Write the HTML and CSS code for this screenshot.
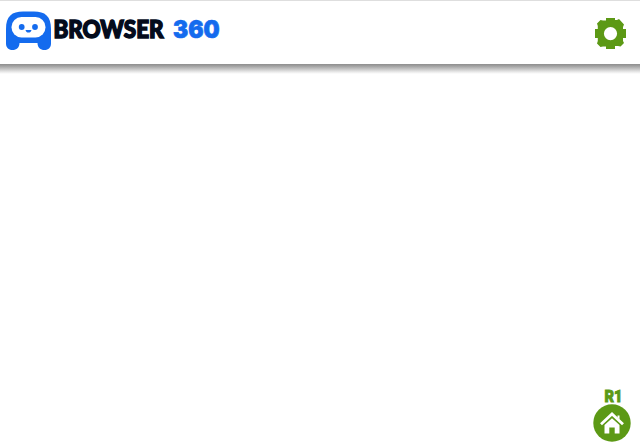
FILE: index.html
```
<!DOCTYPE html>
<html lang="en">
<head>
<meta charset="utf-8">
<title>Browser 360</title>
<link rel="stylesheet" href="styles.css">
</head>
<body>
<header class="header">
  <div class="brand">
    <svg class="logo" width="45" height="39" viewBox="0 0 45 39">
      <path fill="#146bee" d="M0 18C0 5 6 .5 17 .5h11c11 0 17 4.500 17 17.500v14.500c0 4-2.500 6.500-6.500 6.500S31.500 36.500 31.500 32h-18C13.500 36.500 10.500 39 6.500 39S0 36.500 0 32.500z"/>
      <rect x="5.500" y="6" width="34" height="20.500" rx="10" fill="#fff"/>
      <ellipse cx="15.700" cy="16" rx="2.900" ry="3" fill="#146bee"/>
      <ellipse cx="29" cy="16" rx="2.900" ry="3" fill="#146bee"/>
      <path d="M19.500 19h6c-.4 3.400-5.600 3.400-6 0z" fill="#146bee"/>
    </svg>
    <svg class="wordmark" width="168" height="28">
      <text class="word" y="22.500" x="1.500" textLength="110" lengthAdjust="spacingAndGlyphs">BROWSER</text>
      <text class="number" x="121" y="23" textLength="46.500" lengthAdjust="spacingAndGlyphs">360</text>
    </svg>
  </div>
  <svg class="settings" width="31" height="31" viewBox="0 0 31 31">
    <path fill="#5c9915" fill-rule="evenodd" d="M11 0h9v2h2l2-1 5 5.500-1 2.500v2h3v9h-3v3l1 2-3.500 3.500L23 28h-3v3h-9v-2.500H8L5.500 29 2 25.500l.8-2.500V20H0v-9h2.800V8L2 5.500 5.500 2 8 2.500h3zM15.500 9a6.600 6.600 0 1 0 0 13.200a6.600 6.600 0 1 0 0-13.200z"/>
  </svg>
</header>
<main class="content">
  <div class="home">
    <svg class="tag" width="20" height="14"><text class="tag-text" x="1.500" y="12.500" textLength="18" lengthAdjust="spacingAndGlyphs">R1</text></svg>
    <svg class="home-icon" width="38" height="38" viewBox="0 0 38 38">
      <circle cx="19" cy="19" r="18.700" fill="#5c9915"/>
      <path d="M8 20.200L19 10l11 10.200" fill="none" stroke="#fff" stroke-width="2.800"/>
      <path d="M24.500 11.500h2v4l-2-2z" fill="#fff"/>
      <path d="M11.500 21L19 14.200l7.500 6.800v8.500H21.700v-6h-5.400v6h-4.800z" fill="#fff"/>
    </svg>
  </div>
</main>
</body>
</html>
```
FILE: styles.css
```
body {
  margin: 0;
  height: 448px;
  display: flex;
  flex-direction: column;
  background: #fff;
  overflow: hidden;
}
svg { display: block; }
.header {
  box-sizing: border-box;
  height: 64px;
  flex: none;
  display: flex;
  justify-content: space-between;
  align-items: flex-start;
  padding: 10px 14px 0 6px;
  border-top: 1px solid #dedede;
}
.brand { display: flex; gap: 1px; }
.wordmark { margin-top: 4px; overflow: visible; }
.word {
  font: 900 24px Lato, sans-serif;
  fill: #040b1c;
  stroke: #040b1c;
  stroke-width: 1.5px;
}
.number {
  font: 900 24px Inter, sans-serif;
  fill: #146bee;
  stroke: #146bee;
  stroke-width: 0.7px;
  stroke-linejoin: miter;
}
.settings { margin-top: 7px; }
.content {
  flex: 1;
  display: flex;
  justify-content: flex-end;
  align-items: flex-end;
  padding: 0 9.5px 6px 0;
  background: linear-gradient(#8e8e8e, #a0a0a0 2px, #c5c5c5 5px, #eaeaea 8px, #fff 10px);
}
.home {
  display: flex;
  flex-direction: column;
  align-items: center;
}
.tag { margin: 0 0 1px 3px; overflow: visible; }
.tag-text {
  font: 900 16px Roboto, sans-serif;
  fill: #5c9915;
  stroke: #5c9915;
  stroke-width: 0.9px;
}
```
